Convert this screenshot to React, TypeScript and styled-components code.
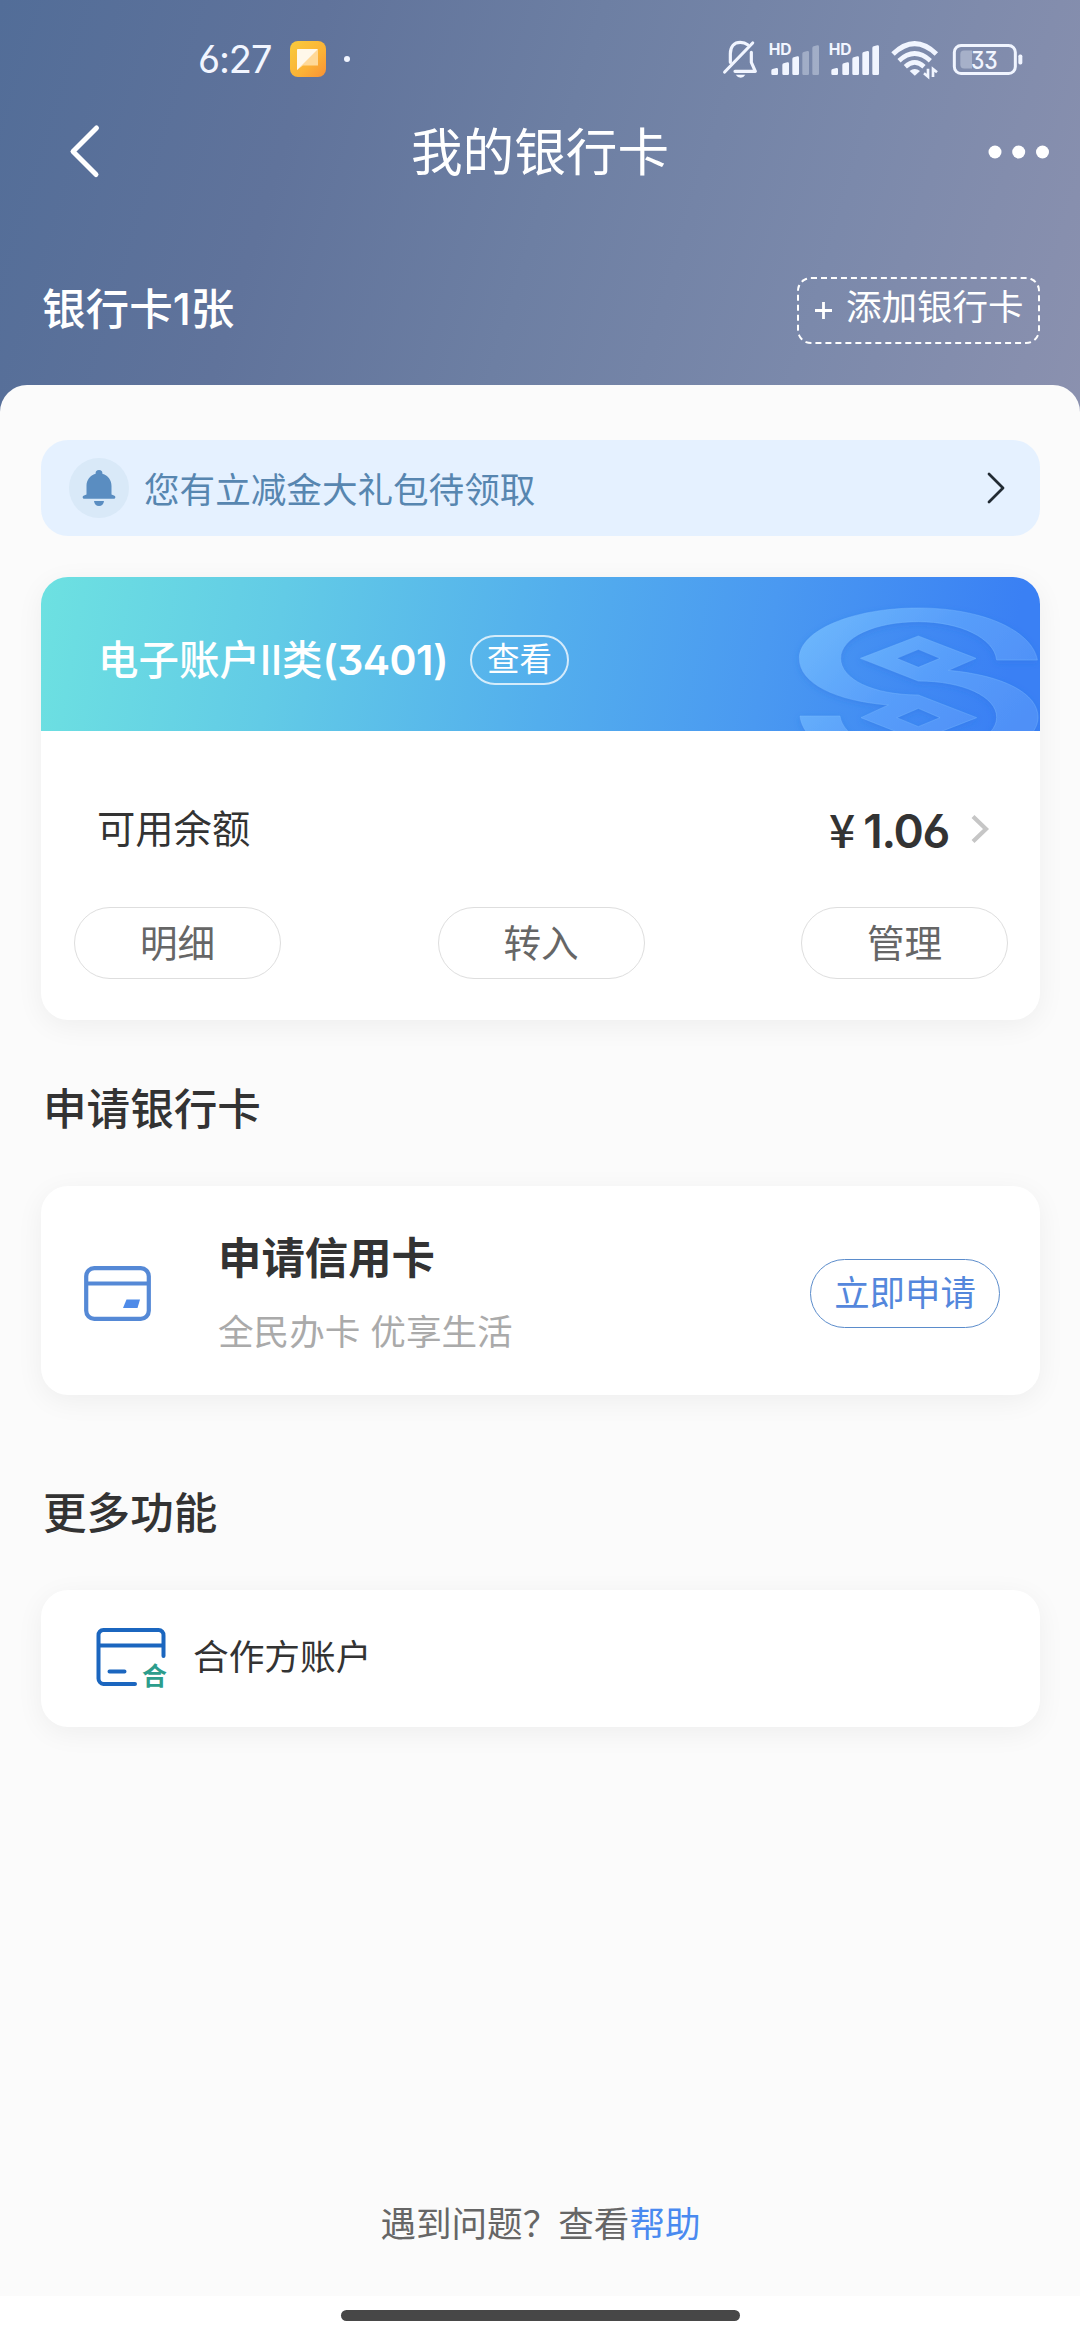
import React from 'react';
import styled, { createGlobalStyle } from 'styled-components';

const GlobalStyle = createGlobalStyle`
  * { box-sizing: border-box; }
  body {
    margin: 0;
    background: #fff;
    font-family: Inter, "Noto Sans CJK SC", sans-serif;
    font-feature-settings: "ss01";
  }
`;

const Screen = styled.div`
  width: 1080px;
  height: 2340px;
  display: flex;
  flex-direction: column;
  overflow: hidden;
  background: linear-gradient(107deg, #526d98 0%, #60739b 27%, #6d7fa3 50%, #7b89ab 75%, #8b91af 100%) 0 0 / 1080px 430px no-repeat, #fff;
  color: #333;
`;

const StatusBar = styled.header`
  height: 118px;
  flex: none;
  display: flex;
  align-items: center;
  padding: 0 58px 0 198px;
  color: #f1f5ff;
`;

const Clock = styled.span`
  width: 92px;
  font-size: 38px;
  line-height: 44px;
  letter-spacing: -1.1px;
`;

const StatusDot = styled.span`
  width: 6px;
  height: 6px;
  margin-left: 18px;
  border-radius: 50%;
  background: #f1f5ff;
`;

const StatusIcons = styled.div`
  margin-left: auto;
  display: flex;
  align-items: center;
`;

const Glyph = styled.svg<{ $left?: number }>`
  display: block;
  flex: none;
  overflow: visible;
  margin-left: ${(p) => p.$left ?? 0}px;
`;

const NavBar = styled.nav`
  height: 68px;
  flex: none;
  display: grid;
  grid-template-columns: 1fr auto 1fr;
  align-items: center;
  padding: 0 31px;
`;

const Title = styled.h1`
  margin: 0;
  font-size: 51.6px;
  font-weight: 400;
  line-height: 66px;
  color: #fff;
`;

const NavRight = styled.div`
  display: flex;
  justify-content: flex-end;
`;

const Summary = styled.section`
  height: 199px;
  flex: none;
  display: flex;
  align-items: flex-start;
  justify-content: space-between;
  padding: 91px 40px 0 42px;
  color: #fff;
`;

const CardCount = styled.h2`
  margin: 0;
  font-size: 43.6px;
  line-height: 65px;
  font-weight: 500;
`;

const AddButton = styled.button`
  width: 243px;
  height: 67px;
  padding: 0 0 5px 14px;
  display: flex;
  align-items: center;
  border: 2px dashed #fff;
  border-radius: 14px;
  background: none;
  color: #fff;
  font: inherit;
  font-size: 35.5px;
  line-height: 40px;
  white-space: nowrap;
`;

const PlusIcon = styled.svg`
  flex: none;
  display: block;
  width: 19px;
  height: 19px;
  margin: 4px 13px 0 1px;
`;

const Sheet = styled.main`
  flex: 1;
  display: flex;
  flex-direction: column;
  padding: 55px 40px 0 41px;
  border-radius: 27px 27px 0 0;
  background: #fbfbfb;
`;

const Notice = styled.div`
  height: 96px;
  flex: none;
  display: flex;
  align-items: center;
  padding: 0 34px 0 28px;
  border-radius: 27px;
  background: #e5f1ff;
`;

const BellBadge = styled.span`
  width: 60px;
  height: 60px;
  display: flex;
  align-items: center;
  justify-content: center;
  border-radius: 50%;
  background: #d9e9f8;
`;

const NoticeText = styled.span`
  flex: 1;
  margin-left: 15px;
  padding-top: 5px;
  font-size: 35.6px;
  line-height: 44px;
  color: #5786b0;
`;

const Card = styled.section<{ $top: number; $height: number }>`
  flex: none;
  height: ${(p) => p.$height}px;
  margin-top: ${(p) => p.$top}px;
  border-radius: 27px;
  background: #fff;
  box-shadow: 0 6px 28px rgba(0, 0, 0, 0.055);
`;

const AccountHead = styled.div`
  height: 154px;
  display: flex;
  align-items: center;
  padding: 12px 0 0 57px;
  border-radius: 27px 27px 0 0;
  overflow: hidden;
  color: #fff;
  background: linear-gradient(100deg, #6de1e1 0%, #62cbe6 24%, #53aeed 51%, #4a99f1 72%, #3a80f4 96%);
`;

const AccountName = styled.span`
  font-size: 40.5px;
  line-height: 50px;
  font-weight: 500;
  white-space: nowrap;
`;

const Digits = styled.span`
  font-size: 41px;
  font-weight: 600;
  letter-spacing: -0.6px;
`;

const ViewPill = styled.button`
  width: 99px;
  height: 50px;
  margin-left: auto;
  padding: 0;
  border: 2px solid rgba(255, 255, 255, 0.75);
  border-radius: 25px;
  background: none;
  color: #fff;
  font: inherit;
  font-size: 32.5px;
  line-height: 40px;
`;

const AccountLabel = styled.div`
  width: 471px;
  display: flex;
  align-items: center;
`;

const BankMark = styled(Glyph)`
  margin: -12px 0 0 auto;
`;

const BalanceRow = styled.div`
  height: 176px;
  display: flex;
  align-items: center;
  padding: 20px 50px 0 56px;
`;

const BalanceLabel = styled.span`
  flex: 1;
  font-size: 38.3px;
  line-height: 48px;
`;

const Amount = styled.span`
  display: flex;
  align-items: baseline;
  gap: 8px;
  margin-right: 22px;
  font-size: 46px;
  line-height: 50px;
  font-weight: 600;
  letter-spacing: -1.3px;
`;

const Yen = styled.span`
  font-family: "Noto Sans CJK SC", sans-serif;
  font-size: 46px;
  font-weight: 500;
  letter-spacing: 0;
`;

const Actions = styled.div`
  display: flex;
  justify-content: space-between;
  padding: 0 32px 0 33px;
`;

const ActionButton = styled.button`
  width: 207px;
  height: 72px;
  padding: 0 0 5px;
  border: 1.5px solid #dedede;
  border-radius: 36px;
  background: #fff;
  color: #666;
  font: inherit;
  font-size: 37.6px;
`;

const SectionTitle = styled.h2<{ $top: number }>`
  margin: ${(p) => p.$top}px 0 0 2px;
  font-size: 43.6px;
  line-height: 56px;
  font-weight: 500;
`;

const ApplyCard = styled(Card)`
  display: flex;
  align-items: center;
  padding: 5px 40px 0 43px;
`;

const ApplyText = styled.div`
  flex: 1;
  margin-left: 67px;
  display: flex;
  flex-direction: column;
`;

const ApplyTitle = styled.span`
  font-size: 43.4px;
  line-height: 56px;
  font-weight: 700;
`;

const ApplySub = styled.span`
  margin-top: 24px;
  font-size: 35.6px;
  line-height: 46px;
  color: #aaa;
`;

const ApplyButton = styled.button`
  width: 190px;
  height: 69px;
  padding: 0 0 5px;
  border: 1.5px solid #5b8ccb;
  border-radius: 35px;
  background: #fff;
  color: #5487dc;
  font: inherit;
  font-size: 35.4px;
`;

const PartnerCard = styled(Card)`
  display: flex;
  align-items: center;
  padding: 0 56px 2px 55px;
`;

const PartnerLabel = styled.span`
  margin: -2px 0 0 26px;
  font-size: 35.7px;
  line-height: 46px;
`;

const HelpLine = styled.p`
  margin: auto 0 48px;
  font-size: 35.6px;
  line-height: 46px;
  text-align: center;
  color: #666;
`;

const HelpLink = styled.a`
  color: #4a8af0;
`;

const HomeArea = styled.footer`
  height: 44px;
  flex: none;
  display: flex;
  justify-content: center;
  padding-top: 14px;
  background: #fff;
`;

const HomeBar = styled.span`
  width: 399px;
  height: 11px;
  border-radius: 6px;
  background: #474747;
`;

const NotesAppIcon = () => (
  <Glyph width="36" height="36" viewBox="0 0 36 36">
    <defs>
      <linearGradient id="notes" x1="0" y1="0" x2="1" y2="1">
        <stop offset="0" stopColor="#f8cb3c" />
        <stop offset="0.6" stopColor="#fbb236" />
        <stop offset="1" stopColor="#f99135" />
      </linearGradient>
    </defs>
    <rect width="36" height="36" rx="8" fill="url(#notes)" />
    <path d="M7 8.5h21v16H13L7 29z" fill="#ffd998" />
    <path d="M8 8h20L7 29V9q0-1 1-1z" fill="#fff8ea" />
  </Glyph>
);

const MutedBell = () => (
  <Glyph width="34" height="38" viewBox="66 61 102 114" fill="none" stroke="#f1f5ff" strokeWidth="9.500" strokeLinecap="round" strokeLinejoin="round">
    <path d="M88 128V102C88 80 100 68 118 68c9 0 17 3 22 7" />
    <path d="M151 98v30l12 27H102" />
    <path d="M71 157L155 70" />
    <path d="M104 165h29q-5 9-14 9t-15-9z" fill="#f1f5ff" stroke="none" />
  </Glyph>
);

const signalBars = [
  { x: 7, top: 75 },
  { x: 40, top: 58 },
  { x: 70, top: 40 },
  { x: 100, top: 24 },
  { x: 130, top: 7 },
];

const Signal = ({ level, left }: { level: number; left: number }) => (
  <Glyph $left={left} width="50" height="33" viewBox="0 0 150 99">
    <text x="-1" y="36" fontSize="47" fontWeight="700" fill="#f1f5ff" textLength="69" lengthAdjust="spacingAndGlyphs">HD</text>
    {signalBars.map((b, i) => (
      <path
        key={b.x}
        d={`M${b.x} ${b.top + 8}q0-4 4-5l11-3q5-1 5 4V92q0 4-4 4H${b.x + 4}q-4 0-4-4z`}
        fill="#f1f5ff"
        opacity={i < level ? 1 : 0.35}
      />
    ))}
  </Glyph>
);

const Wifi = () => (
  <Glyph $left={12} width="47" height="37" viewBox="570 64 141 111" fill="none" stroke="#f1f5ff">
    <path d="M576 103Q641 41 706 103" strokeWidth="15" />
    <path d="M594 123Q641 80 688 123" strokeWidth="14" />
    <path d="M613 141Q641 115 669 141" strokeWidth="14" />
    <path d="M626 154q15-12 31 0l-15.500 14z" fill="#f1f5ff" stroke="none" />
    <path d="M681 147v24l-12-10M696 172v-24l12 10" strokeWidth="8" />
  </Glyph>
);

const Battery = () => (
  <Glyph $left={15} width="69" height="31" viewBox="755 71 207 92">
    <rect x="759" y="75" width="183" height="84" rx="20" fill="none" stroke="#f1f5ff" strokeWidth="9" />
    <path d="M788 90h24v54h-24q-11 0-11-11v-32q0-11 11-11z" fill="#f1f5ff" opacity="0.35" />
    <rect x="951" y="102" width="12" height="30" rx="5" fill="#f1f5ff" />
    <text x="849" y="144" textAnchor="middle" fontSize="73" fontWeight="500" fill="#f1f5ff" textLength="80" lengthAdjust="spacingAndGlyphs">33</text>
  </Glyph>
);

const BankLogo = () => (
  <BankMark width="241" height="154" viewBox="717 531 723 462">
    <defs>
      <linearGradient id="mark" x1="0" y1="0" x2="1" y2="0.5">
        <stop offset="0" stopColor="#70bbfc" />
        <stop offset="0.55" stopColor="#589efa" />
        <stop offset="1" stopColor="#4f90f7" />
      </linearGradient>
      <filter id="markShade" x="-10%" y="-10%" width="120%" height="125%">
        <feDropShadow dx="0" dy="6" stdDeviation="9" floodColor="#2a6fe0" floodOpacity="0.35" />
      </filter>
    </defs>
    <g fill="url(#mark)" fillRule="evenodd" filter="url(#markShade)" stroke="#7cbcff" strokeOpacity="0.35" strokeWidth="3">
      <path d="M1432 780H1310C1303 714 1200 665 1075 665C945 665 842 712 842 775C842 838 940 885 1075 885L1250 953L1075 1021L903 953L985 915C825 902 718 850 718 775C718 690 880 624 1075 624C1265 624 1415 690 1432 780ZM1075 925L1010 953L1075 980L1140 953Z" />
      <path d="M1075 708L1248 775L1165 811C1330 826 1434 880 1434 952C1434 1037 1270 1104 1075 1104C880 1104 730 1040 720 948H840C848 1010 950 1063 1075 1063C1205 1063 1310 1015 1310 952C1310 890 1210 843 1075 843L901 775ZM1075 748L1010 775L1075 802L1140 775Z" />
    </g>
  </BankMark>
);

const App = () => (
  <>
    <GlobalStyle />
    <Screen>
      <StatusBar>
        <Clock>6:27</Clock>
        <NotesAppIcon />
        <StatusDot />
        <StatusIcons>
          <MutedBell />
          <Signal left={12} level={3} />
          <Signal left={10} level={5} />
          <Wifi />
          <Battery />
        </StatusIcons>
      </StatusBar>

      <NavBar>
        <Glyph $left={36} width="34" height="56" viewBox="0 0 34 56" fill="none" stroke="#fff" strokeWidth="5" strokeLinecap="round" strokeLinejoin="round">
          <path d="M29.500 4L6 27.500l23 23" />
        </Glyph>
        <Title>我的银行卡</Title>
        <NavRight>
          <Glyph width="61" height="14" viewBox="0 0 61 14" fill="#fff">
            <circle cx="7" cy="7" r="6.500" />
            <circle cx="30.700" cy="7" r="6.500" />
            <circle cx="54.500" cy="7" r="6.500" />
          </Glyph>
        </NavRight>
      </NavBar>

      <Summary>
        <CardCount>银行卡1张</CardCount>
        <AddButton>
          <PlusIcon viewBox="0 0 19 19" stroke="#fff" strokeWidth="2.800">
            <path d="M9.500 1v17M1 9.500h17" />
          </PlusIcon>
          添加银行卡
        </AddButton>
      </Summary>

      <Sheet>
        <Notice>
          <BellBadge>
            <Glyph width="34" height="36" viewBox="0 0 34 36" fill="#5a8dc1">
              <path d="M17 0a3.500 3.500 0 0 1 3.400 3.700C26 5.500 29.500 10 29.500 16v8.500l3 1.200a1.600 1.600 0 0 1-.5 3H2a1.600 1.600 0 0 1-.5-3l3-1.200V16C4.500 10 8 5.500 13.600 3.700A3.500 3.500 0 0 1 17 0z" />
              <path d="M12 31h10q-.7 5-5 5t-5-5z" />
            </Glyph>
          </BellBadge>
          <NoticeText>您有立减金大礼包待领取</NoticeText>
          <Glyph width="20" height="34" viewBox="0 0 20 34" fill="none" stroke="#222b33" strokeWidth="2.800" strokeLinecap="round" strokeLinejoin="round">
            <path d="M3 3l14 14L3 31" />
          </Glyph>
        </Notice>

        <Card $top={41} $height={443}>
          <AccountHead>
            <AccountLabel>
              <AccountName>
                电子账户II类<Digits>(3401)</Digits>
              </AccountName>
              <ViewPill>查看</ViewPill>
            </AccountLabel>
            <BankLogo />
          </AccountHead>
          <BalanceRow>
            <BalanceLabel>可用余额</BalanceLabel>
            <Amount>
              <Yen>¥</Yen>1.06
            </Amount>
            <Glyph width="19" height="30" viewBox="0 0 19 30" fill="none" stroke="#c6c6c6" strokeWidth="4.200">
              <path d="M2 2.500l13 12.500L2 27.500" />
            </Glyph>
          </BalanceRow>
          <Actions>
            <ActionButton>明细</ActionButton>
            <ActionButton>转入</ActionButton>
            <ActionButton>管理</ActionButton>
          </Actions>
        </Card>

        <SectionTitle $top={62}>申请银行卡</SectionTitle>
        <ApplyCard $top={48} $height={209}>
          <Glyph width="67" height="55" viewBox="0 0 67 55" fill="none" stroke="#5589d6" strokeWidth="4.200">
            <rect x="2.200" y="2.200" width="62.600" height="50.600" rx="8" />
            <path d="M2 17.500h63" />
            <path d="M42.500 33.500H56l-2.500 8.500H39z" fill="#4f8be8" stroke="none" />
          </Glyph>
          <ApplyText>
            <ApplyTitle>申请信用卡</ApplyTitle>
            <ApplySub>全民办卡 优享生活</ApplySub>
          </ApplyText>
          <ApplyButton>立即申请</ApplyButton>
        </ApplyCard>

        <SectionTitle $top={91}>更多功能</SectionTitle>
        <PartnerCard $top={48} $height={137}>
          <Glyph width="71" height="59" viewBox="0 0 71 59" fill="none" stroke="#1b66bf" strokeWidth="4" strokeLinecap="round">
            <path d="M67.500 28V7.500a5 5 0 0 0-5-5.500h-55A5 5 0 0 0 2.500 7.500v43a5.500 5.500 0 0 0 5 5.500H39M3 17.500h64M13.500 43.500h15" />
            <text x="46" y="57" fontSize="25" fontWeight="700" fill="#2c9d8c" stroke="none">合</text>
          </Glyph>
          <PartnerLabel>合作方账户</PartnerLabel>
        </PartnerCard>

        <HelpLine>
          遇到问题？查看<HelpLink>帮助</HelpLink>
        </HelpLine>
      </Sheet>

      <HomeArea>
        <HomeBar />
      </HomeArea>
    </Screen>
  </>
);

export default App;
